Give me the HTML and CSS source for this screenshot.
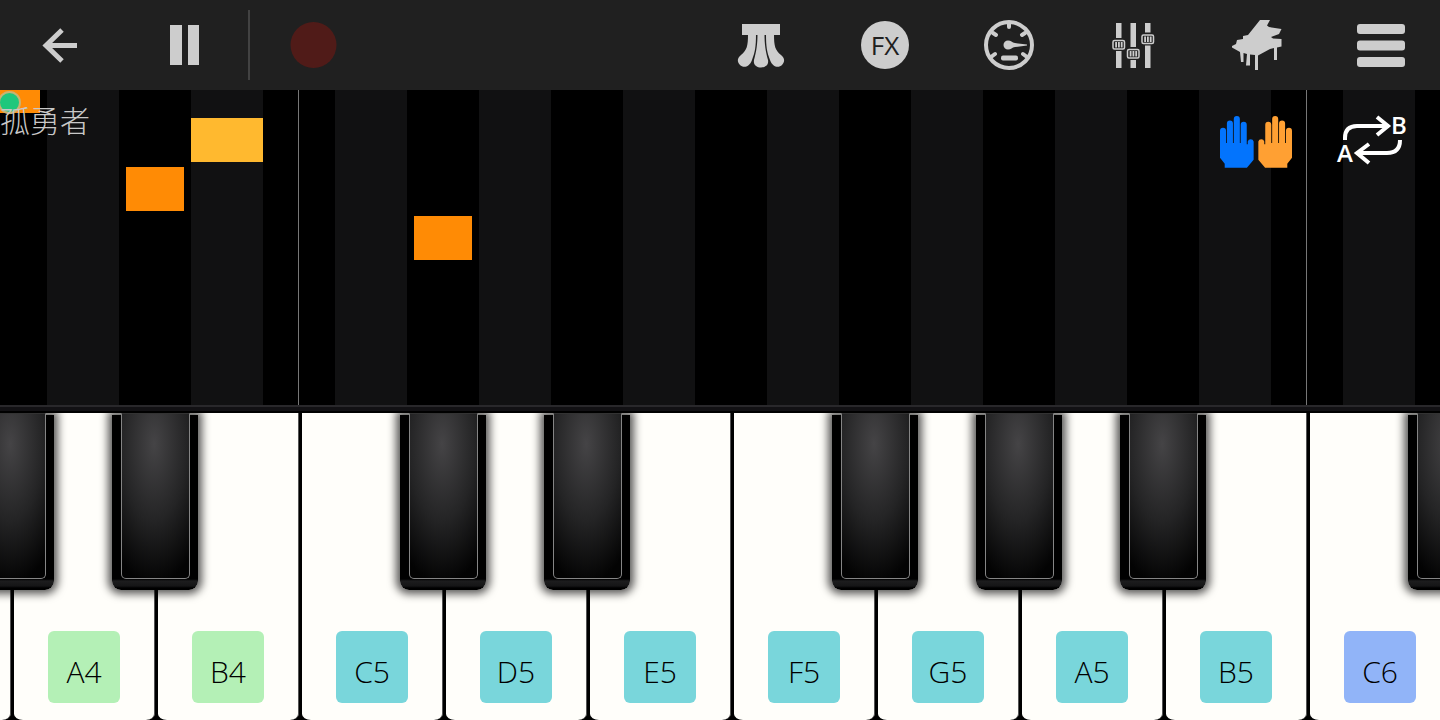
FILE: index.html
```html
<!DOCTYPE html>
<html lang="zh">
<head>
  <meta charset="UTF-8">
  <meta name="viewport" content="width=device-width, initial-scale=1">
  <title>孤勇者</title>
  <link rel="stylesheet" href="styles.css">
</head>
<body>
  <header class="toolbar">
    <button class="tool" aria-label="Back">
      <svg viewBox="0 0 72 72" fill="none" stroke="#cdcdcd" stroke-width="5"><path d="M53 36.500H22M38 21L22 36.500L38 52"/></svg>
    </button>
    <button class="tool" aria-label="Pause">
      <svg viewBox="0 0 72 72" fill="#cdcdcd"><path d="M22 16h12v40H22zM40 16h11v40H40z"/></svg>
    </button>
    <span class="divider"></span>
    <button class="tool" aria-label="Record">
      <svg viewBox="0 0 72 72"><circle cx="35.500" cy="36" r="23" fill="#501b18"/></svg>
    </button>

    <div class="tool-group">
      <button class="tool" aria-label="Pedal">
        <svg viewBox="0 0 72 72" fill="#cdcdcd">
          <path d="M17 15h38v11H17z"/>
          <path d="M23 25h8c0 13-1 18-4 26c-3 8-9 8-12 5c-3-3-3-7 1-10c6-5 7-9 7-21z"/>
          <path d="M49 25h-8c0 13 1 18 4 26c3 8 9 8 12 5c3-3 3-7-1-10c-6-5-7-9-7-21z"/>
          <path d="M32.500 25h7c0 10 1 17 3.500 26c2 10-16 10-14 0c2.500-9 3.500-16 3.500-26z"/>
        </svg>
      </button>
      <button class="tool" aria-label="Effects"><span class="fx">FX</span></button>
      <button class="tool" aria-label="Metronome">
        <svg viewBox="0 0 72 72" fill="#cdcdcd">
          <circle cx="36" cy="36" r="23" fill="none" stroke="#cdcdcd" stroke-width="4"/>
          <path d="M36 14v4M20 24l3 2M52 24l-3 2M18 48l4-3M54 48l-4-3" stroke="#cdcdcd" stroke-width="4" stroke-linecap="round"/>
          <path d="M35 31.500c3 0 4 2 7 2.500l12 1.500v1L42 38c-3 .5-4 2.500-7 2.500a4.500 4.500 0 0 1 0-9z"/>
          <rect x="28" y="46.500" width="17" height="5" rx="2"/>
        </svg>
      </button>
      <button class="tool" aria-label="Mixer">
        <svg viewBox="0 0 72 72" fill="#cdcdcd">
          <path d="M19 14h5.500v45H19zM33.500 14H39v45h-5.500zM48 14h5.500v45H48z"/>
          <g fill="#202020"><path d="M14 29h15v13H14zM28.500 38h15v13h-15zM43 23.500h15v13H43z"/></g>
          <g fill="none" stroke="#cdcdcd" stroke-width="1.500">
            <rect x="16" y="31.500" width="11.500" height="8.500" rx="1.500"/>
            <rect x="30.500" y="40.500" width="11.500" height="8.500" rx="1.500"/>
            <rect x="45" y="26" width="11.500" height="8.500" rx="1.500"/>
          </g>
          <path d="M18.200 33h1.800v5.500h-1.800zM21 33h1.800v5.500H21zM23.800 33h1.800v5.500h-1.800zM32.700 42h1.800v5.500h-1.800zM35.500 42h1.800v5.500h-1.800zM38.300 42h1.800v5.500h-1.800zM47.200 27.500H49V33h-1.800zM50 27.500h1.800V33H50zM52.800 27.500h1.800V33h-1.800z"/>
        </svg>
      </button>
      <button class="tool" aria-label="Instrument">
        <svg viewBox="0 0 72 72" fill="#cdcdcd">
          <path d="M39 11H49L46 16.500L48 18L60.500 20L58 25L50 28L52 29.500L60.500 30V37.500L56 38.500V51H53V39L49 40L37 46.500V61H34V46L29 45.500V56.500H25L26 45L22.500 44V53H20L19 43L11 38.500V37L15 35L16 31L22 30V27L27 26Z"/>
        </svg>
      </button>
      <button class="tool" aria-label="Menu">
        <svg viewBox="0 0 72 72" fill="#cdcdcd">
          <rect x="12" y="15" width="48" height="10" rx="3"/>
          <rect x="12" y="31.500" width="48" height="10" rx="3"/>
          <rect x="12" y="48" width="48" height="10" rx="3"/>
        </svg>
      </button>
    </div>
  </header>

  <main class="roll">
    <!-- falling notes, placed by lane and time -->
    <span class="octave-line line-c5"></span>
    <span class="octave-line line-c6"></span>
    <span class="note sharp n1"></span>
    <span class="note sharp n2"></span>
    <span class="note natural n3"></span>
    <span class="note sharp n4"></span>
    <span class="progress-dot"></span>

    <div class="roll-bar">
      <h1 class="song">孤勇者</h1>
      <button class="hands" aria-label="Hands">
        <svg viewBox="0 0 214 154">
          <defs>
            <path id="hand" d="M0 44a9 9 0 0 1 18 0V80h2.500V22a9 9 0 0 1 18 0V80h2.500V9a9 9 0 0 1 18 0V80h2.500V26a9 9 0 0 1 18 0V84h3V76a9 9 0 0 1 17.500 0V130L80 154H14V142L0 124z"/>
          </defs>
          <use href="#hand" fill="#0374fd"/>
          <use href="#hand" fill="#ffa033" transform="translate(214 0) scale(-1 1)"/>
        </svg>
      </button>
      <button class="loop" aria-label="A-B repeat">
        <svg viewBox="0 0 72 52" fill="none" stroke="#fff" stroke-width="4">
          <path d="M9 25V23Q9 11 21 11H52M41 2L52 11L41 20"/>
          <path d="M64 25Q64 38 51 38H21M33 29L21 38L33 48"/>
          <text x="55" y="19" class="loop-text">B</text>
          <text x="1" y="47" class="loop-text">A</text>
        </svg>
      </button>
    </div>
  </main>

  <div class="rail"></div>

  <div class="keyboard">
    <div class="key"><button class="white" aria-label="G4"></button><button class="black" aria-label="G#4"></button></div>
    <div class="key"><button class="white"><span class="label oct4">A4</span></button><button class="black" aria-label="A#4"></button></div>
    <div class="key"><button class="white"><span class="label oct4">B4</span></button></div>
    <div class="key"><button class="white"><span class="label oct5">C5</span></button><button class="black" aria-label="C#5"></button></div>
    <div class="key"><button class="white"><span class="label oct5">D5</span></button><button class="black" aria-label="D#5"></button></div>
    <div class="key"><button class="white"><span class="label oct5">E5</span></button></div>
    <div class="key"><button class="white"><span class="label oct5">F5</span></button><button class="black" aria-label="F#5"></button></div>
    <div class="key"><button class="white"><span class="label oct5">G5</span></button><button class="black" aria-label="G#5"></button></div>
    <div class="key"><button class="white"><span class="label oct5">A5</span></button><button class="black" aria-label="A#5"></button></div>
    <div class="key"><button class="white"><span class="label oct5">B5</span></button></div>
    <div class="key"><button class="white"><span class="label oct6">C6</span></button><button class="black" aria-label="C#6"></button></div>
  </div>
</body>
</html>
```
FILE: styles.css
```css
:root {
  --key: 10vw;
  --lane: 5vw;
}

* {
  box-sizing: border-box;
}

body {
  margin: 0;
  height: 100vh;
  display: flex;
  flex-direction: column;
  overflow: hidden;
  background: #000;
  font-family: "Open Sans", "Noto Sans CJK SC", sans-serif;
}

button {
  padding: 0;
  border: none;
  background: none;
  font: inherit;
  cursor: pointer;
}

svg {
  display: block;
  width: 100%;
  overflow: visible;
}

/* top toolbar */
.toolbar {
  display: flex;
  align-items: center;
  height: 90px;
  padding: 0 23px 0 24px;
  background: #202020;
}

.tool {
  display: flex;
  align-items: center;
  justify-content: center;
  width: 72px;
  height: 72px;
}

.tool + .tool {
  margin-left: 52px;
}

.divider {
  width: 2px;
  height: 70px;
  margin: 0 28px;
  background: #424242;
}

.tool-group {
  display: flex;
  margin-left: auto;
}

.fx {
  width: 48px;
  height: 48px;
  border-radius: 50%;
  background: #cdcdcd;
  color: #202020;
  font-size: 26px;
  line-height: 48px;
  text-align: center;
}

/* note roll */
.roll {
  position: relative;
  flex: 1;
  overflow: hidden;
  background: repeating-linear-gradient(90deg, #000 0, #000 var(--lane), #111112 var(--lane), #111112 var(--key)) -25px 0 / calc(100% + 25px) 100%;
}

.octave-line {
  position: absolute;
  top: 0;
  bottom: 0;
  width: 1px;
  background: #777;
}

.line-c5 {
  left: calc(var(--lane) * 4 + 10px);
}

.line-c6 {
  left: calc(var(--lane) * 18 + 10px);
}

.note {
  position: absolute;
  height: 44px;
}

.sharp {
  width: 58px;
  margin-left: -18px;
  background: #ff8b05;
}

.natural {
  width: var(--lane);
  margin-left: -25px;
  background: #ffb92f;
}

.n1 {
  left: 0;
  top: -21px;
}

.n2 {
  left: calc(var(--lane) * 2);
  top: 77px;
}

.n3 {
  left: calc(var(--lane) * 3);
  top: 28px;
}

.n4 {
  left: calc(var(--lane) * 6);
  top: 126px;
}

.progress-dot {
  position: absolute;
  left: -2px;
  top: 1px;
  width: 23px;
  height: 23px;
  border: 2px solid #c9b373;
  border-radius: 50%;
  background: #1fc77c;
}

.roll-bar {
  position: relative;
  display: flex;
  align-items: flex-start;
  padding: 12px 32px 0 0;
}

.song {
  margin: 0 auto 0 0;
  color: #c8c8c8;
  font-family: "Noto Sans CJK SC", sans-serif;
  font-size: 30px;
  font-weight: 300;
  line-height: 34px;
}

.hands {
  width: 72px;
  margin: 14px 44px 0 0;
}

.loop {
  width: 72px;
  margin-top: 13px;
}

.loop-text {
  fill: #fff;
  stroke: none;
  font-size: 24px;
  font-weight: 600;
}

.rail {
  height: 8px;
  border-top: 2px solid #29282b;
  border-bottom: 2px solid #000;
  background: #121114;
}

/* keyboard */
.keyboard {
  display: flex;
  height: 307px;
  padding-left: 14px;
  overflow: hidden;
  background: #000;
}

.key {
  position: relative;
  flex: none;
  width: var(--key);
  padding-right: 3px;
}

.key:first-child {
  margin-left: calc(var(--key) * -1);
}

.white {
  display: flex;
  align-items: flex-end;
  justify-content: center;
  width: 100%;
  height: 100%;
  padding-bottom: 17px;
  border-right: 1px solid #555;
  border-radius: 0 0 9px 9px / 0 0 6px 6px;
  background: #fffefa;
}

.black {
  position: absolute;
  z-index: 1;
  top: 2px;
  right: -40px;
  width: 86px;
  height: 175px;
  border-radius: 0 0 9px 9px;
  background: linear-gradient(#000 164px, #1d1d1e 166px, #151516 171px, #000 173px);
  box-shadow: 0 0 9px 4px rgba(0, 0, 0, 0.65);
}

.black::before {
  content: "";
  position: absolute;
  top: -2px;
  left: 9px;
  right: 8px;
  height: 164px;
  border: 1px solid #858585;
  border-top-color: #333;
  border-radius: 0 0 5px 5px;
  background: radial-gradient(ellipse 60px 140px at 48% 30px, #454446, #242425 55%, #030303);
}

.label {
  width: 72px;
  height: 72px;
  padding-top: 5px;
  border-radius: 6px;
  color: #000;
  font-size: 30px;
  font-weight: 300;
  line-height: 72px;
  text-align: center;
}

.oct4 {
  background: #b4f0b6;
}

.oct5 {
  background: #79d6db;
}

.oct6 {
  background: #91b4f8;
}
```
